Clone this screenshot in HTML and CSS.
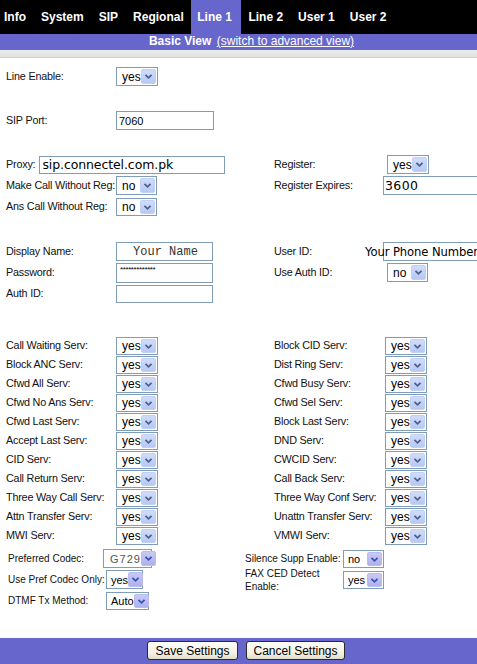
FILE: index.html
```html
<!DOCTYPE html>
<html>
<head>
<meta charset="utf-8">
<title>Line 1 - Basic View</title>
<link rel="stylesheet" href="styles.css">
</head>
<body>
<nav class="tabs">
  <span class="tab first">Info</span>
  <span class="tab">System</span>
  <span class="tab">SIP</span>
  <span class="tab">Regional</span>
  <span class="tab active">Line 1</span>
  <span class="tab">Line 2</span>
  <span class="tab">User 1</span>
  <span class="tab">User 2</span>
</nav>
<div class="subbar"><b>Basic View</b> <a class="sublink">(switch to advanced view)</a></div>
<div class="strip"></div>

<main class="form">
  <section class="grid g1">
    <span class="lbl">Line Enable:</span>
    <span class="cell"><span class="sel w42 h19"><span class="val">yes</span><span class="arr"><svg viewBox="0 0 15 15"><path d="M4 5.5 L7.5 9 L11 5.5"/></svg></span></span></span>
    <span></span><span></span>
    <span class="lbl">SIP Port:</span>
    <span class="cell"><span class="inp w98 h19"><span class="txt sm">7060</span></span></span>
    <span></span><span></span>
  </section>

  <section class="grid g2 r21">
    <span class="proxyrow"><span class="lbl">Proxy:</span><span class="inp w186 h18"><span class="txt big">sip.connectel.com.pk</span></span></span>
    <span class="lbl">Register:</span>
    <span class="cell"><span class="sel w42 h19 nudge"><span class="val">yes</span><span class="arr"><svg viewBox="0 0 15 15"><path d="M4 5.5 L7.5 9 L11 5.5"/></svg></span></span></span>

    <span class="lbl">Make Call Without Reg:</span>
    <span class="cell"><span class="sel w41 h19"><span class="val">no</span><span class="arr"><svg viewBox="0 0 15 15"><path d="M4 5.5 L7.5 9 L11 5.5"/></svg></span></span></span>
    <span class="lbl">Register Expires:</span>
    <span class="cell"><span class="inp w100 h19 uid"><span class="txt big exp">3600</span></span></span>

    <span class="lbl">Ans Call Without Reg:</span>
    <span class="cell"><span class="sel w41 h18"><span class="val">no</span><span class="arr"><svg viewBox="0 0 15 15"><path d="M4 5.5 L7.5 9 L11 5.5"/></svg></span></span></span>
    <span></span><span></span>
  </section>

  <section class="grid g3 r21">
    <span class="lbl">Display Name:</span>
    <span class="cell"><span class="inp w97 h19 center"><span class="txt mono">Your Name</span></span></span>
    <span class="lbl">User ID:</span>
    <span class="cell"><span class="inp w100 h19 uid"><span class="txt big pull">Your Phone Number</span></span></span>

    <span class="lbl">Password:</span>
    <span class="cell"><span class="inp w97 h20 top"><span class="txt tiny">*************</span></span></span>
    <span class="lbl">Use Auth ID:</span>
    <span class="cell"><span class="sel w41 h19 nudge"><span class="val">no</span><span class="arr"><svg viewBox="0 0 15 15"><path d="M4 5.5 L7.5 9 L11 5.5"/></svg></span></span></span>

    <span class="lbl">Auth ID:</span>
    <span class="cell"><span class="inp w97 h18"></span></span>
    <span></span><span></span>
  </section>

  <section class="grid services" id="services"></section>

  <section class="grid2 r21">
    <span class="lbl s">Preferred Codec:</span>
    <span class="cell"><span class="sel w49 h19 lav"><span class="val codec">G729</span><span class="arr"><svg viewBox="0 0 15 15"><path d="M4 5.5 L7.5 9 L11 5.5"/></svg></span></span></span>
    <span class="lbl s">Silence Supp Enable:</span>
    <span class="cell"><span class="sel w41 h18 lav"><span class="val s">no</span><span class="arr"><svg viewBox="0 0 15 15"><path d="M4 5.5 L7.5 9 L11 5.5"/></svg></span></span></span>

    <span class="lbl s">Use Pref Codec Only:</span>
    <span class="cell"><span class="sel w37 h19 lav ml3"><span class="val s">yes</span><span class="arr"><svg viewBox="0 0 15 15"><path d="M4 5.5 L7.5 9 L11 5.5"/></svg></span></span></span>
    <span class="lbl s wrap">FAX CED Detect Enable:</span>
    <span class="cell"><span class="sel w41 h18 lav"><span class="val s">yes</span><span class="arr"><svg viewBox="0 0 15 15"><path d="M4 5.5 L7.5 9 L11 5.5"/></svg></span></span></span>

    <span class="lbl s">DTMF Tx Method:</span>
    <span class="cell"><span class="sel w43 h18 lav ml3"><span class="val s">Auto</span><span class="arr"><svg viewBox="0 0 15 15"><path d="M4 5.5 L7.5 9 L11 5.5"/></svg></span></span></span>
    <span></span><span></span>
  </section>
</main>

<footer class="actions">
  <button class="btn save">Save Settings</button>
  <button class="btn cancel">Cancel Settings</button>
</footer>

<script src="app.js"></script>
</body>
</html>
```

FILE: app.js
```js
(function () {
  var rows = [
    ["Call Waiting Serv:", "Block CID Serv:"],
    ["Block ANC Serv:", "Dist Ring Serv:"],
    ["Cfwd All Serv:", "Cfwd Busy Serv:"],
    ["Cfwd No Ans Serv:", "Cfwd Sel Serv:"],
    ["Cfwd Last Serv:", "Block Last Serv:"],
    ["Accept Last Serv:", "DND Serv:"],
    ["CID Serv:", "CWCID Serv:"],
    ["Call Return Serv:", "Call Back Serv:"],
    ["Three Way Call Serv:", "Three Way Conf Serv:"],
    ["Attn Transfer Serv:", "Unattn Transfer Serv:"],
    ["MWI Serv:", "VMWI Serv:"]
  ];
  var sel = '<span class="cell"><span class="sel w42 h18"><span class="val">yes</span>' +
    '<span class="arr"><svg viewBox="0 0 15 15"><path d="M4 5.5 L7.5 9 L11 5.5"/></svg></span></span></span>';
  var html = "";
  rows.forEach(function (r) {
    html += '<span class="lbl">' + r[0] + '</span>' + sel +
            '<span class="lbl">' + r[1] + '</span>' + sel;
  });
  document.getElementById("services").innerHTML = html;
})();
```

FILE: styles.css
```css
html, body {
  margin: 0;
  padding: 0;
  background: #fff;
}
body {
  font-family: "Liberation Sans", Arial, sans-serif;
  color: #000;
  width: 477px;
  overflow: hidden;
}

/* top tabs */
.tabs {
  display: flex;
  height: 34px;
  background: #000;
}
.tab {
  color: #fff;
  font-weight: bold;
  font-size: 12px;
  line-height: 34px;
  padding: 0 7.5px;
  white-space: nowrap;
}
.tab.first { padding-left: 4px; }
.tab.active {
  background: #6666cc;
  padding: 0 9px 0 6px;
}

.subbar {
  background: #6666cc;
  color: #fff;
  font-size: 12px;
  height: 16px;
  line-height: 15px;
  text-align: center;
  padding-left: 26px;
  white-space: nowrap;
}
.sublink {
  color: #fff;
  text-decoration: underline;
  margin-left: 2px;
}
.strip {
  height: 7px;
  background: linear-gradient(#ececec, #e2e2e2);
  border-bottom: 1px solid #cfcfcf;
}

/* form grids */
.grid {
  display: grid;
  grid-template-columns: 110px 158px 111px 1fr;
  padding-left: 6px;
  align-items: center;
}
.r21 { grid-auto-rows: 21px; }
.g1 { margin-top: 9px; row-gap: 25px; }
.g2 { margin-top: 24px; }
.g3 { margin-top: 24px; }
.services {
  margin-top: 32px;
  grid-auto-rows: 19px;
}
.grid2 {
  display: grid;
  grid-template-columns: 95px 142px 98px 1fr;
  padding-left: 8px;
  align-items: center;
  margin-top: 3px;
}

.lbl {
  font-size: 10.8px;
  white-space: nowrap;
  color: #111;
  line-height: 13px;
  letter-spacing: -0.2px;
}
.lbl.s { font-size: 10px; letter-spacing: 0; }
.lbl.wrap { white-space: normal; line-height: 13px; }

.cell {
  display: flex;
  align-items: center;
}
.proxyrow {
  grid-column: span 2;
  display: flex;
  align-items: center;
  gap: 4px;
}

/* fake select */
.sel {
  box-sizing: border-box;
  display: inline-flex;
  align-items: center;
  justify-content: space-between;
  border: 1px solid #7f9db9;
  background: #fff;
  padding: 0 1px 0 0;
}
.val {
  font-size: 12px;
  padding-left: 5px;
  line-height: 14px;
  color: #000;
  padding-top: 1px;
}
.val.s { font-size: 11px; padding-left: 4px; }
.val.codec {
  font-size: 11px;
  color: #555;
  letter-spacing: 1px;
  padding-left: 6px;
}
.arr {
  box-sizing: border-box;
  width: 15px;
  height: 15px;
  background: linear-gradient(#cfdcfb, #b7c8f5);
  border: 1px solid #c2d0f3;
  border-radius: 2px;
  display: flex;
}
.arr svg { width: 13px; height: 13px; }
.arr path {
  fill: none;
  stroke: #4d6185;
  stroke-width: 2;
}
.sel.h18 .arr { height: 14px; }
.sel.lav .arr {
  background: linear-gradient(#c9c9f4, #aeb2ec);
  border-color: #b9bcef;
}
.sel.lav .arr path { stroke: #3a4fb8; }

.w37 { width: 37px; }
.w41 { width: 41px; }
.w42 { width: 42px; }
.w43 { width: 43px; }
.w49 { width: 49px; }
.w97 { width: 97px; }
.w98 { width: 98px; }
.w100 { width: 100px; }
.w186 { width: 186px; }
.h18 { height: 18px; }
.h19 { height: 19px; }
.h20 { height: 20px; }
.ml3 { margin-left: 3px; }
.nudge { margin-left: 2px; }

/* fake text inputs */
.inp {
  box-sizing: border-box;
  display: inline-flex;
  align-items: center;
  border: 1px solid #7f9db9;
  background: #fff;
  overflow: visible;
  white-space: nowrap;
  flex: none;
}
.inp.uid { margin-left: -2px; }
.inp.center { justify-content: center; }
.inp.top { align-items: flex-start; }
.txt { padding-left: 2px; }
.txt.sm { font-size: 11px; }
.txt.big {
  font-family: "DejaVu Sans", Verdana, sans-serif;
  font-size: 12.5px;
  letter-spacing: -0.1px;
}
.txt.exp { letter-spacing: 0.4px; padding-left: 1px; }
.txt.mono {
  font-family: "Liberation Mono", "Courier New", monospace;
  font-size: 12px;
  color: #333;
}
.txt.tiny {
  font-size: 8px;
  line-height: 10px;
  padding-left: 3px;
  padding-top: 1px;
  letter-spacing: -0.4px;
}
.txt.pull {
  margin-left: -19px;
  padding-left: 0;
  font-size: 11.6px;
  letter-spacing: -0.1px;
}

/* footer */
.actions {
  margin-top: 27px;
  background: #6666cc;
  display: flex;
  gap: 8px;
  padding: 3px 0 6px 147px;
}
.btn {
  box-sizing: border-box;
  height: 19px;
  font-family: "Liberation Sans", Arial, sans-serif;
  font-size: 12px;
  color: #000;
  border: 1px solid #2b2b2b;
  border-radius: 3px;
  background: linear-gradient(#fffffb, #f2efe2 70%, #e2ddc8);
  padding: 0;
  line-height: 16px;
}
.save { width: 91px; }
.cancel { width: 99px; }
```
